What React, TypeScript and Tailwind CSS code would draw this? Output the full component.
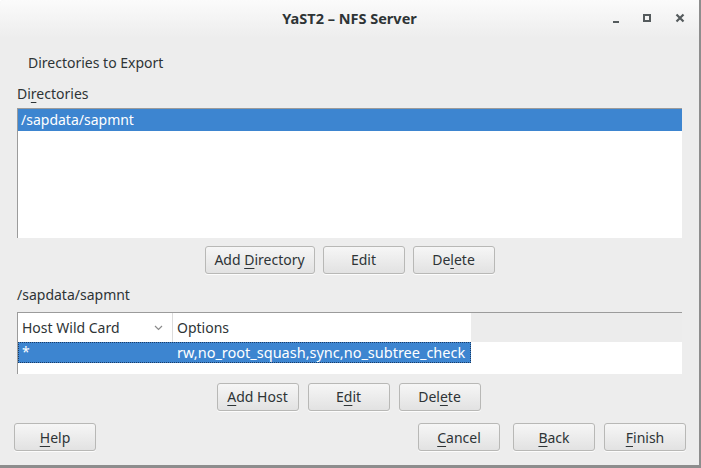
import React from 'react';

const font = { fontFamily: '"Noto Sans", "Open Sans", "DejaVu Sans", sans-serif' };

// mnemonic letter underlined, like GTK accelerators
function Mn({ text, at }: { text: string; at: number }) {
  return (
    <>
      {text.slice(0, at)}
      <span className="underline decoration-1 underline-offset-[3px]">{text[at]}</span>
      {text.slice(at + 1)}
    </>
  );
}

function Btn({ children, w = 'w-[82px]' }: { children: React.ReactNode; w?: string }) {
  return (
    <button
      className={`${w} h-[28px] rounded-[3px] border border-[#b8b8b6] bg-gradient-to-b from-[#f6f6f6] to-[#e2e2e2] text-[14px] text-[#2e3436] shadow-[0_1px_0_rgba(255,255,255,0.8)]`}
    >
      {children}
    </button>
  );
}

export default function App() {
  return (
    <div
      className="w-[701px] h-[468px] bg-[#ededed] flex flex-col border-r-2 border-b-[3px] border-[#8d8d8d] rounded-tl-[4px] overflow-hidden text-[#2e3436]"
      style={font}
    >
      {/* Title bar */}
      <div className="relative h-[38px] flex items-center justify-center bg-gradient-to-b from-[#fbfbfb] to-[#ededed] shrink-0">
        <span className="text-[14.5px] font-bold text-[#2e3436]">YaST2 – NFS Server</span>
        <div className="absolute right-[14px] top-[13px] flex items-center gap-[24px]">
          <span className="mt-[8px] block w-[6px] h-[2px] bg-[#555b5d]" />
          <span className="block w-[8px] h-[8px] border-2 border-[#555b5d]" />
          <svg width="10" height="10" viewBox="0 0 10 10">
            <path d="M1.5 1.5 L8.5 8.5 M8.5 1.5 L1.5 8.5" stroke="#555b5d" strokeWidth="2.2" />
          </svg>
        </div>
      </div>

      <div className="flex flex-col px-[17px] text-[14px] leading-[18px]">
        <div className="mt-[16px] pl-[11px]">Directories to Export</div>
        <div className="mt-[13px]">
          <Mn text="Directories" at={2} />
        </div>

        {/* Directory list */}
        <div className="mt-[5px] h-[130px] bg-white border-t border-l border-[#9b9b9b]">
          <div className="h-[22px] bg-[#3d85d0] text-white pl-[3px] leading-[22px]">/sapdata/sapmnt</div>
        </div>

        <div className="mt-[8px] flex justify-center gap-[8px]">
          <Btn w="w-[110px]">
            Add <Mn text="Directory" at={0} />
          </Btn>
          <Btn>Edit</Btn>
          <Btn>
            <Mn text="Delete" at={2} />
          </Btn>
        </div>

        <div className="mt-[12px]">/sapdata/sapmnt</div>

        {/* Host table */}
        <div className="mt-[8px] h-[62px] bg-white border-t border-l border-[#9b9b9b] flex flex-col">
          <div className="flex h-[29px] shrink-0">
            <div className="w-[453px] flex bg-white">
              <div className="w-[155px] flex items-center justify-between pl-[4px] pr-[9px] border-r border-[#dcdcdc]">
                <span>Host Wild Card</span>
                <svg width="9" height="6" viewBox="0 0 9 6">
                  <path d="M1 1 L4.5 4.5 L8 1" stroke="#8a8a8a" strokeWidth="1.2" fill="none" />
                </svg>
              </div>
              <div className="pl-[4px] flex items-center">Options</div>
            </div>
            <div className="flex-1 bg-[#ececec]" />
          </div>
          <div className="flex h-[21px] shrink-0">
            <div className="w-[453px] flex bg-[#3d85d0] text-white border border-dotted border-[#1a3c66]">
              <div className="w-[155px] pl-[3px] leading-[18px]">*</div>
              <div className="pl-[3px] leading-[18px] whitespace-nowrap text-[14.5px]">rw,no_root_squash,sync,no_subtree_check</div>
            </div>
          </div>
        </div>

        <div className="mt-[9px] flex justify-center gap-[9px] pr-[2px]">
          <Btn>
            <Mn text="Add Host" at={0} />
          </Btn>
          <Btn>
            <Mn text="Edit" at={1} />
          </Btn>
          <Btn>
            <Mn text="Delete" at={3} />
          </Btn>
        </div>
      </div>

      {/* Bottom buttons */}
      <div className="mt-[12px] flex pl-[14px] pr-[13px]">
        <Btn>
          <Mn text="Help" at={0} />
        </Btn>
        <div className="ml-auto flex gap-[13px]">
          <Btn>
            <Mn text="Cancel" at={0} />
          </Btn>
          <div className="flex gap-[9px]">
            <Btn>
              <Mn text="Back" at={0} />
            </Btn>
            <Btn>
              <Mn text="Finish" at={0} />
            </Btn>
          </div>
        </div>
      </div>
    </div>
  );
}
